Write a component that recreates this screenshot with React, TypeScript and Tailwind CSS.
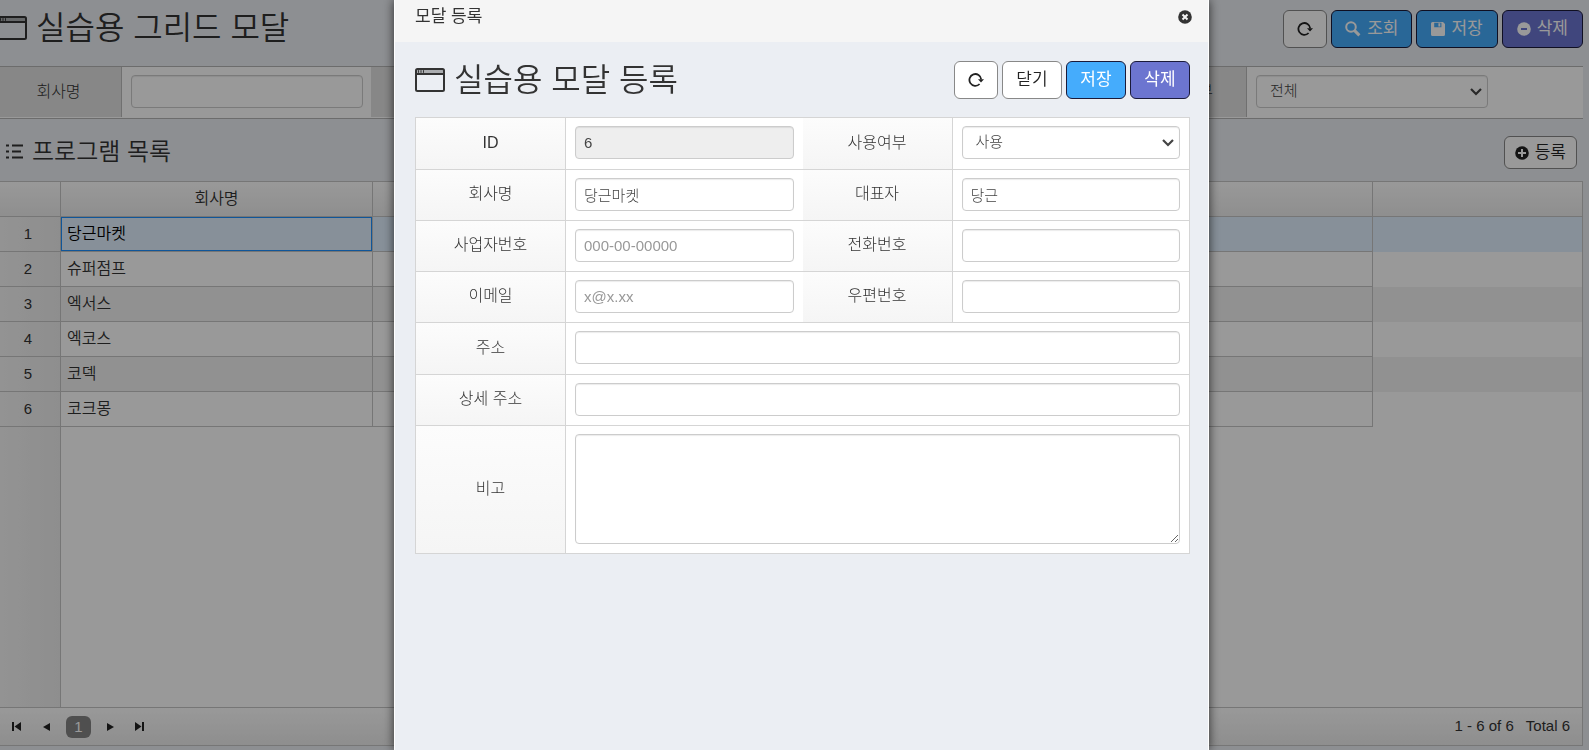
import { useState } from "react";
import type { ReactNode } from "react";

const companies = ["당근마켓", "슈퍼점프", "엑서스", "엑코스", "코덱", "코크몽"];

const inputClass =
  "block h-[33px] w-full rounded border border-[#ccc] bg-white px-2 font-light text-[#444] shadow-[inset_0_1px_1px_rgba(0,0,0,0.08)] placeholder:text-[#999]";

function WindowIcon() {
  return (
    <svg width="30" height="24" viewBox="0 0 30 24" fill="none" stroke="currentColor" className="shrink-0">
      <rect x="1" y="1" width="28" height="22" rx="1.5" strokeWidth="2" />
      <path d="M1 6h28" strokeWidth="2" />
      <path d="M2 3.500h26" strokeWidth="3" strokeOpacity="0.35" />
      <path d="M3.500 2.200v2.600M6 2.200v2.600M8.500 2.200v2.600" strokeWidth="1" />
    </svg>
  );
}

function RefreshIcon() {
  return (
    <svg width="16" height="16" viewBox="0 0 16 16" fill="none">
      <path d="M13.200 7.400A5.900 5.900 0 1 0 11.600 12" stroke="currentColor" strokeWidth="1.800" />
      <path d="M10 7.200h6l-3 3.400z" fill="currentColor" />
    </svg>
  );
}

function SearchIcon() {
  return (
    <svg width="16" height="16" viewBox="0 0 16 16" fill="none" stroke="currentColor">
      <circle cx="6" cy="6" r="4.800" strokeWidth="2" />
      <path d="M9.600 9.600l4.800 4.800" strokeWidth="3" />
    </svg>
  );
}

function SaveIcon() {
  return (
    <svg width="14" height="14" viewBox="0 0 14 14" fill="currentColor">
      <path
        fillRule="evenodd"
        d="M1.500 0H12l2 2v10.500a1.500 1.500 0 0 1-1.500 1.500h-11A1.500 1.500 0 0 1 0 12.500V1.500A1.500 1.500 0 0 1 1.500 0zM3.200 0.800V5.200H10.400V0.800zM7.400 1.300H9.300V4.400H7.400z"
      />
    </svg>
  );
}

function CircleIcon({ d, line }: { d: string; line: string }) {
  return (
    <svg width="14" height="14" viewBox="0 0 14 14" fill="none">
      <circle cx="7" cy="7" r="6.800" fill="currentColor" />
      <path d={d} stroke={line} strokeWidth="2" />
    </svg>
  );
}

function ListIcon() {
  return (
    <svg width="17" height="15" viewBox="0 0 17 15" stroke="currentColor" strokeWidth="2">
      <path d="M0 1.500h3M6 1.500h11M0 7.500h3M6 7.500h9M0 13.500h3M6 13.500h11" />
    </svg>
  );
}

function Button({
  tone = "white",
  label,
  className = "min-w-[60px] px-3",
  onClick,
  children,
}: {
  tone?: "white" | "blue" | "purple";
  label?: string;
  className?: string;
  onClick?: () => void;
  children: ReactNode;
}) {
  const tones = {
    white: "border-[#888] bg-white text-[#222] font-[350]",
    blue: "border-[#1a1a3a] bg-[#45acfc] text-white",
    purple: "border-[#1a1a3a] bg-[#6c75d0] text-white",
  };
  return (
    <button
      type="button"
      aria-label={label}
      onClick={onClick}
      className={`flex items-center justify-center gap-1.5 rounded-md border text-[17px] whitespace-nowrap ${tones[tone]} ${className}`}
    >
      {children}
    </button>
  );
}

function Select({ id, options }: { id: string; options: string[] }) {
  return (
    <div className="relative">
      <select id={id} className={`${inputClass} appearance-none pl-[13px]`}>
        {options.map((option) => (
          <option key={option}>{option}</option>
        ))}
      </select>
      <svg
        width="12"
        height="8"
        viewBox="0 0 12 8"
        fill="none"
        stroke="#444"
        strokeWidth="2.200"
        className="pointer-events-none absolute top-[13px] right-1.5"
      >
        <path d="M1 1l5 5 5-5" />
      </svg>
    </div>
  );
}

function SearchField({ id, label, last, children }: { id: string; label: string; last?: boolean; children: ReactNode }) {
  return (
    <div className={last ? "flex flex-1" : "flex shrink-0"}>
      <label
        htmlFor={id}
        className="flex h-[50px] w-[126px] shrink-0 items-center justify-center border-r border-[#bbb] bg-[#e2e2e2] text-base font-light"
      >
        {label}
      </label>
      <div className="w-[249px] py-2 pr-2 pl-[9px]">{children}</div>
    </div>
  );
}

function Th({ id, children }: { id: string; children: ReactNode }) {
  return (
    <th
      scope="row"
      className="border-r border-b border-[#d5d5d5] bg-linear-to-b from-[#fcfcfc] to-[#f5f5f5] p-0 pb-0.5 text-center text-base font-light text-[#333]"
    >
      <label htmlFor={id}>{children}</label>
    </th>
  );
}

function Td({ span, children }: { span?: number; children: ReactNode }) {
  return (
    <td colSpan={span} className="border-b border-[#d5d5d5] bg-white px-[9px] pt-2 pb-[9px] align-top">
      {children}
    </td>
  );
}

function Modal({ onClose }: { onClose: () => void }) {
  return (
    <div className="fixed inset-0 z-10 flex justify-center overflow-hidden bg-black/40 pl-3.5">
      <div
        role="dialog"
        aria-label="모달 등록"
        className="w-[815px] border-x border-white bg-[#ebeef3] shadow-[0_0_10px_rgba(0,0,0,0.7)]"
      >
        <div className="flex h-[42px] justify-between bg-[#f5f5f5] pr-4 pb-2 pl-5 text-[#333]">
          <h2 className="flex items-center text-[17px]">모달 등록</h2>
          <button type="button" aria-label="창 닫기" onClick={onClose}>
            <CircleIcon d="M4.500 4.500l5 5M9.500 4.500l-5 5" line="#f5f5f5" />
          </button>
        </div>

        <div className="pr-[18px] pl-5">
          <div className="flex items-center justify-between pt-[19px] pb-[18px]">
            <h1 className="flex h-[38px] items-center gap-[9px] text-[32px] font-[350] text-[#333]">
              <WindowIcon />
              실습용 모달 등록
            </h1>
            <div className="flex h-[38px] gap-1">
              <Button label="새로고침" className="px-[13px]">
                <RefreshIcon />
              </Button>
              <Button onClick={onClose}>닫기</Button>
              <Button tone="blue">저장</Button>
              <Button tone="purple">삭제</Button>
            </div>
          </div>

          <form>
            <table className="w-full table-fixed border-separate border-spacing-0 border-t border-r border-l border-[#d5d5d5]">
              <colgroup>
                <col className="w-[150px]" />
                <col />
                <col className="w-[150px]" />
                <col />
              </colgroup>
              <tbody>
                <tr className="h-[52px]">
                  <Th id="company-id">ID</Th>
                  <Td>
                    <input id="company-id" readOnly defaultValue="6" className={inputClass.replace("bg-white", "bg-[#eee]")} />
                  </Td>
                  <Th id="use-yn">사용여부</Th>
                  <Td>
                    <Select id="use-yn" options={["사용", "미사용"]} />
                  </Td>
                </tr>
                <tr className="h-[51px]">
                  <Th id="name">회사명</Th>
                  <Td>
                    <input id="name" defaultValue="당근마켓" className={inputClass} />
                  </Td>
                  <Th id="ceo">대표자</Th>
                  <Td>
                    <input id="ceo" defaultValue="당근" className={inputClass} />
                  </Td>
                </tr>
                <tr className="h-[51px]">
                  <Th id="biz-no">사업자번호</Th>
                  <Td>
                    <input id="biz-no" placeholder="000-00-00000" className={inputClass} />
                  </Td>
                  <Th id="tel">전화번호</Th>
                  <Td>
                    <input id="tel" className={inputClass} />
                  </Td>
                </tr>
                <tr className="h-[51px]">
                  <Th id="email">이메일</Th>
                  <Td>
                    <input id="email" placeholder="x@x.xx" className={inputClass} />
                  </Td>
                  <Th id="zip">우편번호</Th>
                  <Td>
                    <input id="zip" className={inputClass} />
                  </Td>
                </tr>
                <tr className="h-[52px]">
                  <Th id="address">주소</Th>
                  <Td span={3}>
                    <input id="address" className={inputClass} />
                  </Td>
                </tr>
                <tr className="h-[51px]">
                  <Th id="address-detail">상세 주소</Th>
                  <Td span={3}>
                    <input id="address-detail" className={inputClass} />
                  </Td>
                </tr>
                <tr>
                  <Th id="remark">비고</Th>
                  <Td span={3}>
                    <textarea id="remark" className={inputClass.replace("h-[33px]", "h-[110px]")} />
                  </Td>
                </tr>
              </tbody>
            </table>
          </form>
        </div>
      </div>
    </div>
  );
}

export default function App() {
  const [open, setOpen] = useState(true);
  const [selected, setSelected] = useState(0);

  return (
    <div className="overflow-hidden bg-[#ebeef3] font-['Liberation_Sans','Noto_Sans_CJK_KR',sans-serif] text-[15px] text-[#333]">
      <div className="-ml-1 flex min-h-screen flex-col pr-1.5 pb-1">
        <header className="flex items-center justify-between pt-[10px] pb-[18px]">
          <h1 className="flex h-[38px] items-center gap-[9px] pb-0.5 pl-px text-[32px] font-[350]">
            <WindowIcon />
            실습용 그리드 모달
          </h1>
          <div className="flex h-[38px] gap-1">
            <Button label="새로고침" className="px-[13px]">
              <RefreshIcon />
            </Button>
            <Button tone="blue" className="px-[13px]">
              <SearchIcon />
              조회
            </Button>
            <Button tone="blue" className="px-3.5">
              <SaveIcon />
              저장
            </Button>
            <Button tone="purple" className="px-3.5">
              <CircleIcon d="M4 7h6" line="#6c75d0" />
              삭제
            </Button>
          </div>
        </header>

        <form className="flex h-[53px] border-y border-[#b5b5b5] bg-white">
          <SearchField id="s-name" label="회사명">
            <input id="s-name" className={inputClass} />
          </SearchField>
          <SearchField id="s-ceo" label="대표자">
            <input id="s-ceo" className={inputClass} />
          </SearchField>
          <SearchField id="s-tel" label="전화번호">
            <input id="s-tel" className={inputClass} />
          </SearchField>
          <SearchField id="s-use" label="사용여부" last>
            <Select id="s-use" options={["전체", "사용", "미사용"]} />
          </SearchField>
        </form>

        <div className="flex items-center justify-between pt-[17px] pr-1.5 pb-3 pl-2.5">
          <h2 className="flex h-[33px] items-center gap-[9px] pb-0.5 text-2xl font-[350]">
            <ListIcon />
            프로그램 목록
          </h2>
          <Button className="h-[33px] px-[10px]" onClick={() => setOpen(true)}>
            <CircleIcon d="M7 3v8M3 7h8" line="#fff" />
            등록
          </Button>
        </div>

        <section className="flex flex-1 flex-col border-y border-r border-[#c5c5c5] bg-white">
          <table className="w-full table-fixed border-separate border-spacing-0">
            <colgroup>
              <col className="w-[65px]" />
              <col className="w-[312px]" />
              <col className="w-[1000px]" />
              <col />
            </colgroup>
            <thead>
              <tr className="h-[35px] bg-linear-to-b from-white to-[#ededed]">
                <th className="border-r border-b border-[#c5c5c5] p-0" />
                <th className="border-r border-b border-[#c5c5c5] p-0 text-base font-[350]">회사명</th>
                <th className="border-r border-b border-[#c5c5c5] p-0" />
                <th className="border-b border-[#c5c5c5] p-0" />
              </tr>
            </thead>
            <tbody>
              {companies.map((company, i) => (
                <tr
                  key={company}
                  onClick={() => setSelected(i)}
                  className={
                    i === selected ? "h-[35px] bg-[#e1f0ff] text-black" : i % 2 === 0 ? "h-[35px] bg-[#f2f2f2]" : "h-[35px] bg-white"
                  }
                >
                  <td className="border-r border-b border-[#c5c5c5] bg-linear-to-r from-[#f6f6f6] to-[#ededed] p-0 text-center text-[#333]">
                    {i + 1}
                  </td>
                  <td className="border-r border-b border-[#c5c5c5] p-0 text-base font-[350]">
                    <div className={i === selected ? "flex h-[34px] items-center border border-[#1b8fff] px-[5px]" : "px-1.5"}>
                      {company}
                    </div>
                  </td>
                  <td className="border-r border-b border-[#c5c5c5] p-0" />
                  <td className="p-0" />
                </tr>
              ))}
            </tbody>
          </table>
          <div className="flex flex-1 bg-white">
            <div className="w-[65px] border-r border-[#c5c5c5] bg-linear-to-r from-[#f6f6f6] to-[#ededed]" />
          </div>
          <div className="flex h-[38px] items-center justify-between border-t border-[#c5c5c5] bg-linear-to-b from-white to-[#ededed] pr-3 pl-4">
            <div className="flex items-center">
              <button type="button" aria-label="처음" className="flex w-[31px]">
                <svg width="9" height="9" viewBox="0 0 9 9" fill="#222">
                  <path d="M0 0h2v9H0zM9 0v9L2.500 4.500z" />
                </svg>
              </button>
              <button type="button" aria-label="이전" className="flex w-[23px]">
                <svg width="7" height="8" viewBox="0 0 7 8" fill="#222">
                  <path d="M7 0v8L0 4z" />
                </svg>
              </button>
              <button type="button" className="mr-4 h-[22px] w-[25px] rounded-md bg-[#848484] text-white">
                1
              </button>
              <button type="button" aria-label="다음" className="flex w-7">
                <svg width="7" height="8" viewBox="0 0 7 8" fill="#222">
                  <path d="M0 0v8l7-4z" />
                </svg>
              </button>
              <button type="button" aria-label="마지막" className="flex">
                <svg width="9" height="9" viewBox="0 0 9 9" fill="#222">
                  <path d="M7 0h2v9H7zM0 0v9l6.500-4.500z" />
                </svg>
              </button>
            </div>
            <p className="flex gap-3">
              <span>1 - 6 of 6</span>
              <span>Total 6</span>
            </p>
          </div>
        </section>
      </div>

      {open && <Modal onClose={() => setOpen(false)} />}
    </div>
  );
}
